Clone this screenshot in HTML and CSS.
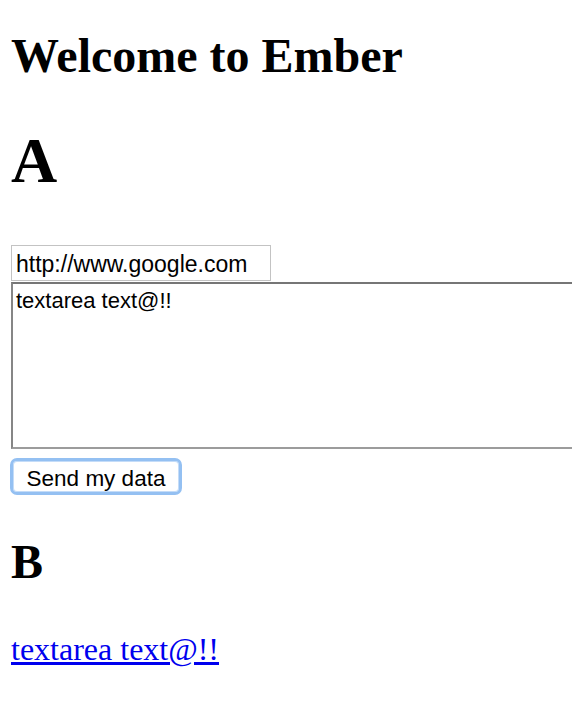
FILE: index.html
```html
<!DOCTYPE html>
<html>
<head>
<meta charset="utf-8">
<title>Ember</title>
<link rel="stylesheet" href="styles.css">
</head>
<body>
<div class="page">
  <h2 class="title">Welcome to Ember</h2>
  <h1 class="big">A</h1>
  <form class="form">
    <input class="url" type="text" value="http://www.google.com">
    <textarea class="area">textarea text@!!</textarea>
    <button class="send" type="button">Send my data</button>
  </form>
  <h2 class="sub">B</h2>
  <div class="out"><a class="link" href="#">textarea text@!!</a></div>
</div>
</body>
</html>
```
FILE: styles.css
```css
html, body {
  margin: 0;
  padding: 0;
  overflow: hidden;
  background: #fff;
}
.page {
  padding: 28px 0 0 11px;
  font-family: "Liberation Serif", "Times New Roman", serif;
  color: #000;
}
.title {
  margin: 0;
  font-size: 48px;
  line-height: 56px;
  font-weight: bold;
}
.big {
  margin: 41px 0 0;
  font-size: 64px;
  line-height: 72px;
  font-weight: bold;
}
.form {
  margin: 48px 0 0;
  display: flex;
  flex-direction: column;
  align-items: flex-start;
}
.url {
  box-sizing: border-box;
  width: 260px;
  height: 36px;
  margin: 0;
  padding: 5px 3px 3px 4px;
  border: 1px solid #c3c3c3;
  font-family: "Liberation Sans", Helvetica, Arial, sans-serif;
  font-size: 23px;
  line-height: 26px;
  color: #000;
  outline: none;
}
.area {
  box-sizing: border-box;
  width: 561px;
  height: 167px;
  margin: 1px 0 0;
  padding: 4px 3px 1px 3px;
  border-top: 2px solid #767676;
  border-left: 2px solid #868686;
  border-bottom: 2px solid #9c9c9c;
  border-right: none;
  font-family: "Liberation Sans", Helvetica, Arial, sans-serif;
  font-size: 22px;
  line-height: 25px;
  color: #000;
  resize: none;
  outline: none;
  overflow: hidden;
}
.send {
  box-sizing: border-box;
  width: 172px;
  height: 37px;
  margin: 9px 0 0 -1px;
  padding: 5px 0 1px;
  border: 3px solid #94c0f2;
  border-radius: 7px;
  box-shadow: inset 0 0 0 1px #c4dcf8;
  background: #fff;
  font-family: "Liberation Sans", Helvetica, Arial, sans-serif;
  font-size: 22.5px;
  line-height: 25px;
  color: #000;
}
.sub {
  margin: 39px 0 0;
  font-size: 48px;
  line-height: 56px;
  font-weight: bold;
}
.out {
  margin: 41px 0 0;
  font-size: 32px;
  line-height: 37px;
}
.link {
  color: #0000ee;
  text-decoration: underline;
}
```
